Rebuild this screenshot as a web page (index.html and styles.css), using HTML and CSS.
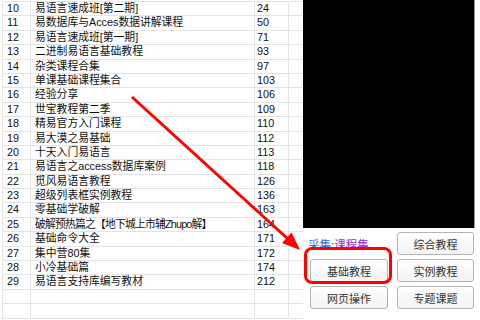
FILE: index.html
```html
<!DOCTYPE html>
<html lang="zh-CN">
<head>
  <meta charset="UTF-8">
  <title>课程集</title>
  <link rel="stylesheet" href="styles.css">
</head>
<body>
  <div class="list">
    <div class="row"><span class="num">10</span><span class="name">易语言速成班[第二期]</span><span class="count">24</span><span class="pad"></span></div>
    <div class="row"><span class="num">11</span><span class="name">易数据库与Acces数据讲解课程</span><span class="count">50</span><span class="pad"></span></div>
    <div class="row"><span class="num">12</span><span class="name">易语言速成班[第一期]</span><span class="count">71</span><span class="pad"></span></div>
    <div class="row"><span class="num">13</span><span class="name">二进制易语言基础教程</span><span class="count">93</span><span class="pad"></span></div>
    <div class="row"><span class="num">14</span><span class="name">杂类课程合集</span><span class="count">97</span><span class="pad"></span></div>
    <div class="row"><span class="num">15</span><span class="name">单课基础课程集合</span><span class="count">103</span><span class="pad"></span></div>
    <div class="row"><span class="num">16</span><span class="name">经验分享</span><span class="count">106</span><span class="pad"></span></div>
    <div class="row"><span class="num">17</span><span class="name">世宝教程第二季</span><span class="count">109</span><span class="pad"></span></div>
    <div class="row"><span class="num">18</span><span class="name">精易官方入门课程</span><span class="count">110</span><span class="pad"></span></div>
    <div class="row"><span class="num">19</span><span class="name">易大漠之易基础</span><span class="count">112</span><span class="pad"></span></div>
    <div class="row"><span class="num">20</span><span class="name">十天入门易语言</span><span class="count">113</span><span class="pad"></span></div>
    <div class="row"><span class="num">21</span><span class="name">易语言之access数据库案例</span><span class="count">118</span><span class="pad"></span></div>
    <div class="row"><span class="num">22</span><span class="name">觅风易语言教程</span><span class="count">126</span><span class="pad"></span></div>
    <div class="row"><span class="num">23</span><span class="name">超级列表框实例教程</span><span class="count">136</span><span class="pad"></span></div>
    <div class="row"><span class="num">24</span><span class="name">零基础学破解</span><span class="count">163</span><span class="pad"></span></div>
    <div class="row"><span class="num">25</span><span class="name narrow">破解预热篇之【地下城上市辅Zhupo解】</span><span class="count">164</span><span class="pad"></span></div>
    <div class="row"><span class="num">26</span><span class="name">基础命令大全</span><span class="count">171</span><span class="pad"></span></div>
    <div class="row"><span class="num">27</span><span class="name">集中营80集</span><span class="count">172</span><span class="pad"></span></div>
    <div class="row"><span class="num">28</span><span class="name">小冷基础篇</span><span class="count">174</span><span class="pad"></span></div>
    <div class="row"><span class="num">29</span><span class="name">易语言支持库编写教材</span><span class="count">212</span><span class="pad"></span></div>
    <div class="row"><span class="num"></span><span class="name"></span><span class="count"></span><span class="pad"></span></div>
    <div class="row"><span class="num"></span><span class="name"></span><span class="count"></span><span class="pad"></span></div>
  </div>

  <div class="side">
    <div class="screen"></div>
    <div class="buttons">
      <div class="source">采集:<span class="link">课程集</span></div>
      <button>综合教程</button>
      <button>基础教程</button>
      <button>实例教程</button>
      <button>网页操作</button>
      <button>专题课题</button>
    </div>
  </div>

  <div class="highlight"></div>
  <svg class="arrow" width="480" height="320" viewBox="0 0 480 320">
    <line x1="132" y1="97" x2="288" y2="239" stroke="#f00" stroke-width="3"/>
    <polygon points="300,250 282,243 291.5,232.5" fill="#f00"/>
  </svg>
</body>
</html>
```

FILE: styles.css
```css
body {
  margin: 0;
  width: 480px;
  height: 320px;
  overflow: hidden;
  display: flex;
  align-items: flex-start;
  background: #fff;
  font-family: "Liberation Sans", "Noto Sans CJK SC", sans-serif;
  color: #111;
}
.list {
  margin: 1px 0 0 2px;
  border-left: 1px solid #e3e3e3;
  border-top: 1px solid #e3e3e3;
}
.row {
  display: grid;
  grid-template-columns: 28px 224px 34px 14px;
  height: 14.4px;
  box-sizing: border-box;
  border-bottom: 1px solid #e3e3e3;
  font-size: 10.8px;
  line-height: 13.4px;
}
.row span {
  border-right: 1px solid #e3e3e3;
  white-space: nowrap;
  overflow: hidden;
}
.row .pad {
  border-right: none;
}
.num {
  padding-left: 4px;
}
.name {
  padding-left: 4px;
}
.name.narrow {
  letter-spacing: -0.8px;
}
.count {
  padding-left: 2px;
}
.side {
  width: 177px;
}
.screen {
  width: 171px;
  height: 228px;
  background: #000;
  border-right: 1px solid #9a9a9a;
}
.buttons {
  display: grid;
  grid-template-columns: 78px 77px;
  grid-template-rows: 23px 23px 23px;
  column-gap: 9px;
  row-gap: 4px;
  margin-top: 4px;
  padding-left: 7px;
}
.source {
  align-self: center;
  margin-left: -2px;
  font-family: "Noto Sans CJK SC", sans-serif;
  font-size: 11.5px;
  color: #1f6fe0;
}
.link {
  color: #9a1ee8;
}
button {
  padding: 0;
  font-family: "Noto Sans CJK SC", sans-serif;
  font-size: 11px;
  color: #333;
  background: linear-gradient(#ffffff, #f3f3f3);
  border: 1px solid #b4b4b4;
  border-radius: 3px;
}
.highlight {
  position: absolute;
  left: 304px;
  top: 247px;
  width: 88px;
  height: 37px;
  box-sizing: border-box;
  border: 3px solid #f00;
  border-radius: 8px;
}
.arrow {
  position: absolute;
  left: 0;
  top: 0;
  pointer-events: none;
}
```
